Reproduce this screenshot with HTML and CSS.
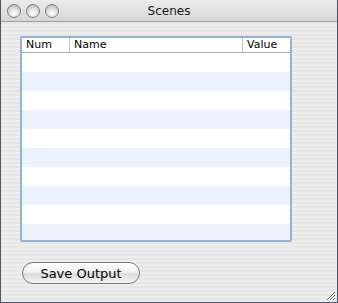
FILE: index.html
```html
<!DOCTYPE html>
<html lang="en">
<head>
  <meta charset="UTF-8">
  <title>Scenes</title>
  <link rel="stylesheet" href="styles.css">
</head>
<body>
  <div class="window">
    <div class="titlebar">
      <div class="lights">
        <span class="light"></span>
        <span class="light"></span>
        <span class="light"></span>
      </div>
      <div class="title">Scenes</div>
    </div>

    <div class="content">
      <div class="table">
        <div class="head">
          <div class="col num">Num</div>
          <div class="col name">Name</div>
          <div class="col value">Value</div>
        </div>
        <div class="rows">
          <div class="row"></div>
          <div class="row alt"></div>
          <div class="row"></div>
          <div class="row alt"></div>
          <div class="row"></div>
          <div class="row alt"></div>
          <div class="row"></div>
          <div class="row alt"></div>
          <div class="row"></div>
          <div class="row alt"></div>
        </div>
      </div>

      <button class="btn">Save Output</button>
    </div>

    <svg class="grip" width="12" height="12" viewBox="0 0 12 12">
      <path d="M11 3 L3 11 M11 6 L6 11 M11 9 L9 11" stroke="#6a6a6a" stroke-width="1"/>
      <path d="M11 4 L4 11 M11 7 L7 11 M11 10 L10 11" stroke="#ffffff" stroke-width="1"/>
    </svg>
  </div>
</body>
</html>
```

FILE: styles.css
```css
body {
  margin: 0;
  font-family: "DejaVu Sans", "Liberation Sans", sans-serif;
}
.window {
  position: relative;
  width: 338px;
  height: 303px;
  box-sizing: border-box;
  border: 1px solid #4c5669;
  border-top: none;
  background: repeating-linear-gradient(to bottom, #ededed 0, #ededed 2px, #e6e6e6 2px, #e6e6e6 4px);
}
.titlebar {
  height: 21px;
  display: flex;
  align-items: center;
  position: relative;
  background: linear-gradient(to bottom, #ececec, #d6d6d6);
  border-bottom: 1px solid #a0a0a0;
}
.lights {
  display: flex;
  gap: 5px;
  padding-left: 6px;
}
.light {
  width: 12px;
  height: 12px;
  border-radius: 50%;
  border: 1px solid #7d7d7d;
  background: radial-gradient(circle at 50% 70%, #ffffff 0, #e2e2e2 45%, #a9a9a9 100%);
}
.title {
  position: absolute;
  left: 0;
  right: 0;
  text-align: center;
  font-size: 12px;
  color: #1a1a1a;
}
.content {
  padding: 14px 0 0 19px;
  display: flex;
  flex-direction: column;
  align-items: flex-start;
}
.table {
  width: 272px;
  height: 206px;
  box-sizing: border-box;
  border: 2px solid #94b4d6;
  border-radius: 2px;
  background: #fff;
  overflow: hidden;
  display: flex;
  flex-direction: column;
}
.head {
  display: flex;
  height: 14px;
  border-bottom: 1px solid #a8a8a8;
  background: #fff;
  font-size: 11px;
  color: #000;
}
.col {
  padding-left: 4px;
  line-height: 14px;
  box-sizing: border-box;
}
.num { width: 48px; border-right: 1px solid #c4c4c4; }
.name { flex: 1; border-right: 1px solid #c4c4c4; }
.value { width: 47px; }
.row {
  height: 19px;
}
.row.alt {
  background: #edf3fe;
}
.btn {
  margin-top: 20px;
  margin-left: 2px;
  width: 118px;
  height: 22px;
  border: 1px solid #7a7a7a;
  border-radius: 11px;
  background: linear-gradient(to bottom, #ffffff 0, #f2f2f2 45%, #dcdcdc 55%, #f4f4f4 100%);
  font-family: "DejaVu Sans", "Liberation Sans", sans-serif;
  font-size: 13px;
  color: #000;
  padding: 0;
}
.grip {
  position: absolute;
  right: 1px;
  bottom: 1px;
}
```
